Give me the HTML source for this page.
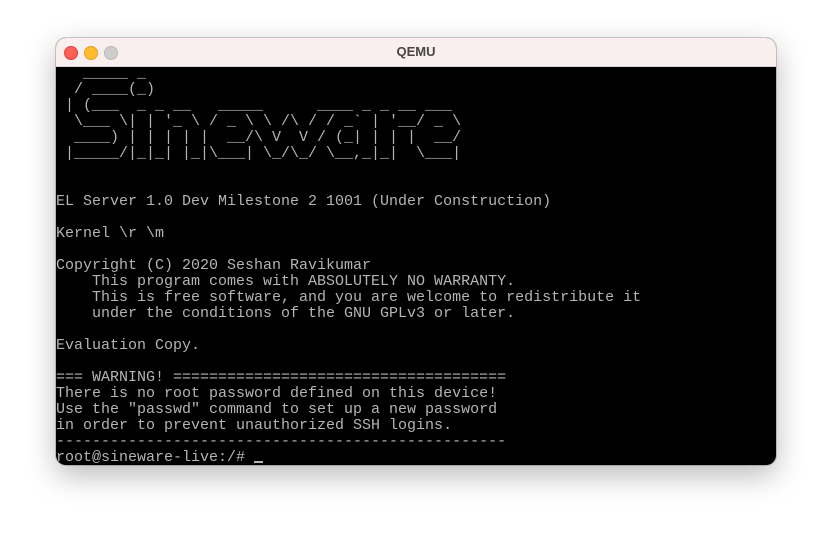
<!DOCTYPE html>
<html><head><meta charset="utf-8"><style>
html,body{margin:0;padding:0;background:#fff;width:832px;height:540px;overflow:hidden}
.win{position:absolute;left:56px;top:38px;width:720px;height:427px;border-radius:10px;overflow:hidden;background:#000;box-shadow:0 10px 30px rgba(0,0,0,.28),0 0 0 1px rgba(0,0,0,.18)}
.tb{position:absolute;left:0;top:0;width:720px;height:28px;background:#f9efee;border-bottom:1px solid #d8d0ce}
.tb .t{position:absolute;left:0;right:0;top:6px;text-align:center;font:bold 13px "Liberation Sans",sans-serif;color:#4a4444}
.d{position:absolute;top:8px;width:12px;height:12px;border-radius:50%}
pre{position:absolute;left:0;top:28px;margin:0;font-family:"Liberation Mono",monospace;font-size:15px;line-height:16px;color:#b4b4b4;white-space:pre}
.cur{display:inline-block;width:9px;height:2px;background:#b4b4b4;vertical-align:-2px}
</style></head><body>
<div class="win">
<div class="tb"><div class="d" style="left:8px;background:#fe5f57;border:0.5px solid #e0443e"></div><div class="d" style="left:28px;background:#febc2e;border:0.5px solid #dea123"></div><div class="d" style="left:48px;background:#d0cccb;border:0.5px solid #bdb8b7"></div><div class="t">QEMU</div></div>
<pre>   _____ _
  / ____(_)
 | (___  _ _ __   _____      ____ _ _ __ ___
  \___ \| | '_ \ / _ \ \ /\ / / _` | '__/ _ \
  ____) | | | | |  __/\ V  V / (_| | | |  __/
 |_____/|_|_| |_|\___| \_/\_/ \__,_|_|  \___|


EL Server 1.0 Dev Milestone 2 1001 (Under Construction)

Kernel \r \m

Copyright (C) 2020 Seshan Ravikumar
    This program comes with ABSOLUTELY NO WARRANTY.
    This is free software, and you are welcome to redistribute it
    under the conditions of the GNU GPLv3 or later.

Evaluation Copy.

=== WARNING! =====================================
There is no root password defined on this device!
Use the "passwd" command to set up a new password
in order to prevent unauthorized SSH logins.
--------------------------------------------------
root@sineware-live:/# <span class="cur"></span></pre>
</div>
</body></html>
